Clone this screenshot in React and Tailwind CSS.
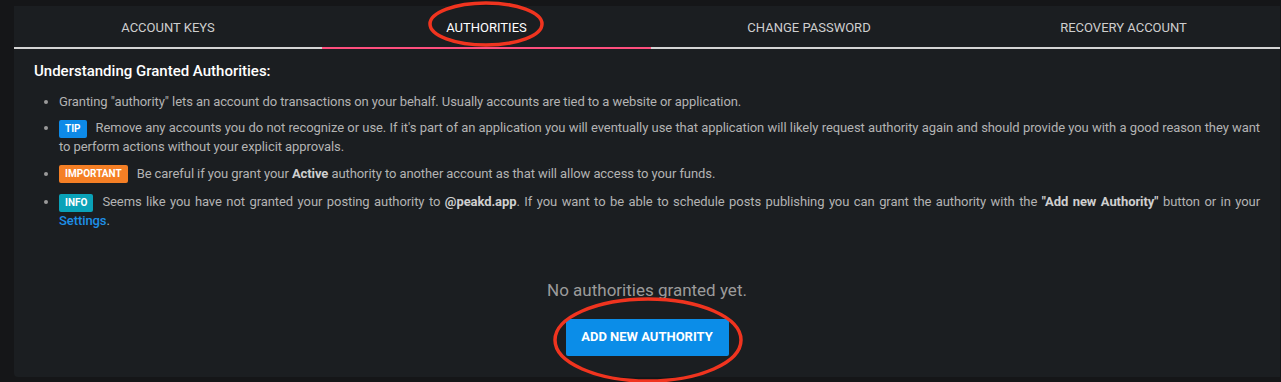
import React from "react";

const Badge = ({ children, color }) => (
  <span
    className={`inline-flex h-[18px] items-center rounded-[2px] px-[6px] align-middle text-[10px] font-bold uppercase leading-none tracking-normal text-white ${color}`}
  >
    {children}
  </span>
);

export default function App() {
  return (
    <div
      className="relative h-[382px] w-[1281px] overflow-hidden bg-[#151618] pt-[6px] pl-[14px] pr-[1px]"
      style={{ fontFamily: "Roboto, 'Liberation Sans', sans-serif" }}
    >
      <div className="h-[371px] rounded-bl-[4px] bg-[#1b1e21]">
        {/* Tabs */}
        <div className="relative grid h-[43px] grid-cols-[308px_329px_316px_1fr] border-b-2 border-[#d4d4d4]">
          {["ACCOUNT KEYS", "AUTHORITIES", "CHANGE PASSWORD", "RECOVERY ACCOUNT"].map((t, i) => (
            <div
              key={t}
              className={`flex items-center justify-center pt-[3px] text-[13px] ${
                i === 1 ? "text-white" : "text-[#cfcfcf]"
              }`}
            >
              {t}
            </div>
          ))}
          <div className="absolute bottom-[-2px] left-[308px] h-[2px] w-[329px] bg-[#ff4f7e]" />
        </div>

        {/* Content */}
        <div className="px-[20px] pt-[12px]">
          <h3 className="text-[15px] font-medium leading-[20px] text-white">
            Understanding Granted Authorities:
          </h3>
          <ul className="mt-[12px] list-disc pl-[25px] text-justify text-[13px] leading-[17px] tracking-[-0.08px] text-[#b3b3b3] marker:text-[#9a9a9a]">
            <li className="mb-[9px]">
              Granting "authority" lets an account do transactions on your behalf. Usually accounts are tied to a
              website or application.
            </li>
            <li className="mb-[10px]">
              <Badge color="bg-[#0d8ae8]">Tip</Badge>
              <span className="ml-[9px]">
                Remove any accounts you do not recognize or use. If it's part of an application you will eventually
                use that application will likely request authority again and should provide you with a good reason
                they want to perform actions without your explicit approvals.
              </span>
            </li>
            <li className="mb-[10px]">
              <Badge color="bg-[#f57f25]">Important</Badge>
              <span className="ml-[9px]">
                Be careful if you grant your <b className="font-bold text-[#cfcfcf]">Active</b> authority to another
                account as that will allow access to your funds.
              </span>
            </li>
            <li>
              <Badge color="bg-[#0aa2b8]">Info</Badge>
              <span className="ml-[9px]">
                Seems like you have not granted your posting authority to{" "}
                <b className="font-bold text-[#cfcfcf]">@peakd.app</b>. If you want to be able to schedule posts
                publishing you can grant the authority with the{" "}
                <b className="font-bold text-[#cfcfcf]">"Add new Authority"</b> button or in your{" "}
                <a className="font-medium text-[#1d8fe6]">Settings</a>.
              </span>
            </li>
          </ul>

          <div className="mt-[51px] flex flex-col items-center">
            <p className="text-[17px] leading-[20px] text-[#9b9b9b]">No authorities granted yet.</p>
            <button className="mt-[19px] h-[37px] w-[163px] rounded-[2px] bg-[#0b8de8] text-[13px] font-bold text-white">
              ADD NEW AUTHORITY
            </button>
          </div>
        </div>
      </div>

      {/* Annotation ellipses */}
      <svg className="pointer-events-none absolute left-0 top-0" width="1281" height="382">
        <ellipse cx="486" cy="24" rx="56" ry="21" fill="none" stroke="#f0341f" strokeWidth="3.5" />
        <ellipse cx="648" cy="340" rx="93" ry="41" fill="none" stroke="#f0341f" strokeWidth="3.5" />
      </svg>
    </div>
  );
}
